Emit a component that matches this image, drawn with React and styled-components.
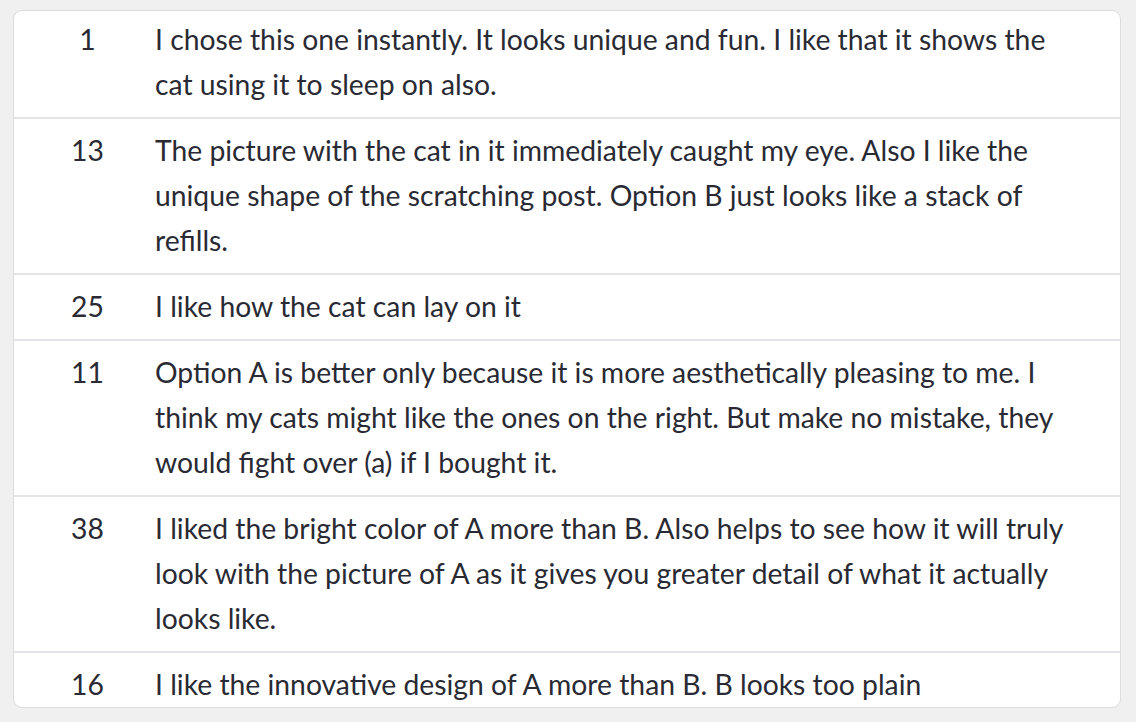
import React from 'react';
import styled, { createGlobalStyle } from 'styled-components';

const GlobalStyle = createGlobalStyle`
  html, body {
    margin: 0;
    padding: 0;
    background: #f0f0f0;
  }
`;

const Page = styled.div`
  width: 1136px;
  height: 722px;
  box-sizing: border-box;
  padding: 10px 15px 14px 13px;
  background: #f0f0f0;
  overflow: hidden;
`;

const Card = styled.div`
  height: 100%;
  box-sizing: border-box;
  background: #fff;
  border: 1.5px solid #dcdcdc;
  border-radius: 9px;
  overflow: hidden;
  font-family: Lato, "Open Sans", sans-serif;
  font-size: 28.3px;
  line-height: 45px;
  color: #292a33;
`;

const Row = styled.div`
  display: grid;
  grid-template-columns: 141px 1fr;
  padding: ${p => (p.first ? '6px' : '9px')} 40px 10px 0;
  border-top: ${p => (p.first ? 'none' : '2px solid #e2e4e8')};
`;

const Num = styled.div`
  padding-left: 6px;
  text-align: center;
`;

const Text = styled.div``;

const rows = [
  { id: 1, text: 'I chose this one instantly. It looks unique and fun. I like that it shows the cat using it to sleep on also.' },
  { id: 13, text: 'The picture with the cat in it immediately caught my eye. Also I like the unique shape of the scratching post. Option B just looks like a stack of refills.' },
  { id: 25, text: 'I like how the cat can lay on it' },
  { id: 11, text: 'Option A is better only because it is more aesthetically pleasing to me. I think my cats might like the ones on the right. But make no mistake, they would fight over (a) if I bought it.' },
  { id: 38, text: 'I liked the bright color of A more than B. Also helps to see how it will truly look with the picture of A as it gives you greater detail of what it actually looks like.' },
  { id: 16, text: 'I like the innovative design of A more than B. B looks too plain' },
];

export default function App() {
  return (
    <>
      <GlobalStyle />
      <Page>
        <Card>
          {rows.map((r, i) => (
            <Row key={r.id} first={i === 0}>
              <Num>{r.id}</Num>
              <Text>{r.text}</Text>
            </Row>
          ))}
        </Card>
      </Page>
    </>
  );
}
